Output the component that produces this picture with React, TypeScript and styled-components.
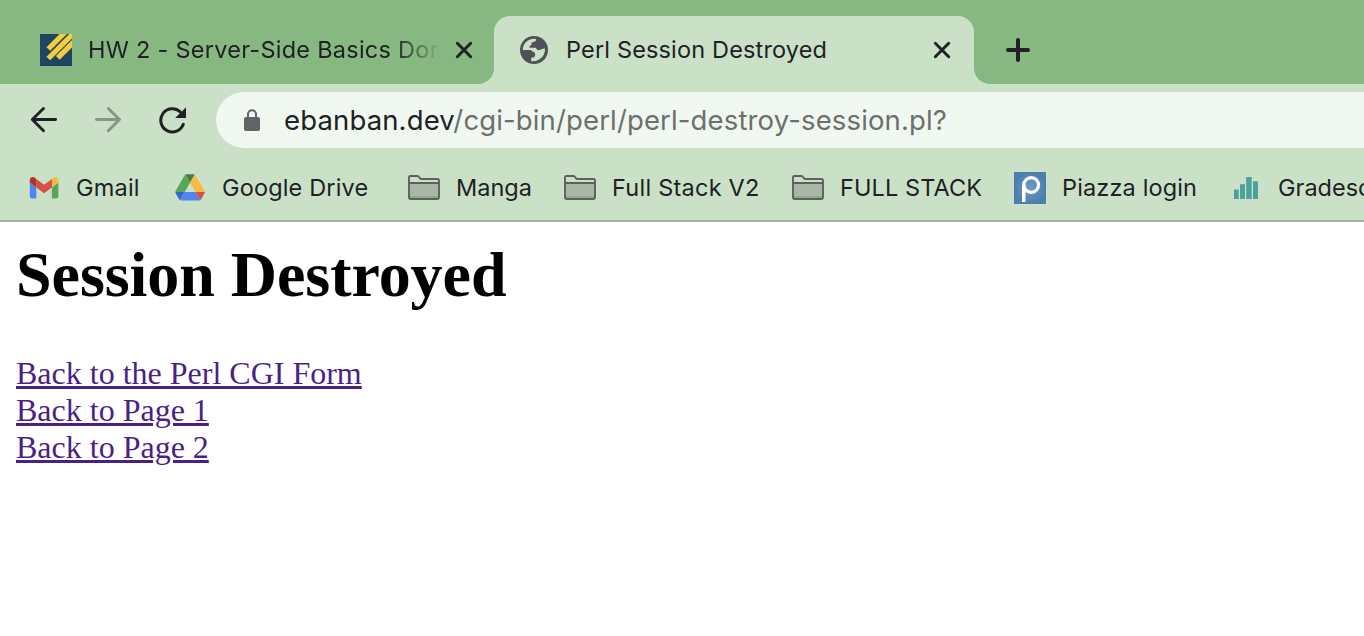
import React from "react";
import styled, { createGlobalStyle } from "styled-components";

const ink = "#202124";
const strip = "#87b882";
const surface = "#cbe1c7";

const GlobalStyle = createGlobalStyle`
  * { box-sizing: border-box; }
  html, body { margin: 0; background: #fff; }
  body { overflow: hidden; }
`;

const Browser = styled.div`
  width: 1364px;
  height: 636px;
  overflow: hidden;
  display: flex;
  flex-direction: column;
  font-family: "Inter", sans-serif;
  color: ${ink};
  svg { display: block; flex: none; }
`;

const TabStrip = styled.div`
  height: 84px;
  display: flex;
  background: ${surface};
`;

const InactiveTab = styled.div`
  width: 494px;
  padding: 16px 21px 0 40px;
  display: flex;
  align-items: center;
  background: ${strip};
  border-bottom-right-radius: 16px;
`;

const ActiveSlot = styled.div`
  width: 480px;
  padding-top: 16px;
  background: ${strip};
`;

const ActiveTab = styled.div`
  height: 68px;
  padding: 0 23px 0 26px;
  display: flex;
  align-items: center;
  background: ${surface};
  border-radius: 16px 16px 0 0;
`;

const StripEnd = styled.div`
  flex: 1;
  padding: 16px 0 0 32px;
  display: flex;
  align-items: center;
  background: ${strip};
  border-bottom-left-radius: 16px;
`;

const Label = styled.span<{ $track: number; $size?: number }>`
  font-size: ${(p) => p.$size ?? 23.5}px;
  line-height: 32px;
  letter-spacing: ${(p) => p.$track}px;
  white-space: pre;
`;

const TabTitle = styled(Label)<{ $fade?: boolean }>`
  flex: 1;
  min-width: 0;
  overflow: hidden;
  margin-left: ${(p) => (p.$fade ? 16 : 18)}px;
  margin-right: ${(p) => (p.$fade ? 16 : 10)}px;
  ${(p) => p.$fade && "mask-image: linear-gradient(to right, #000 calc(100% - 46px), transparent calc(100% + 2px));"}
`;

const Toolbar = styled.div`
  height: 72px;
  padding: 8px 0 8px 30px;
  display: flex;
  align-items: center;
  background: ${surface};
`;

const NavIcons = styled.div`
  width: 186px;
  display: flex;
  gap: 36px;
`;

const AddressBar = styled.div`
  flex: 1;
  height: 56px;
  padding-left: 27px;
  display: flex;
  align-items: center;
  gap: 23px;
  background: #f1f8f1;
  border-radius: 28px 0 0 28px;
`;

const Path = styled.span`
  color: #6b706d;
`;

const BookmarksBar = styled.div`
  height: 66px;
  padding-left: 28px;
  display: flex;
  align-items: center;
  background: ${surface};
  border-bottom: 2px solid #a5b1a2;
`;

const Bookmark = styled.div<{ $width: number }>`
  flex: none;
  width: ${(p) => p.$width}px;
  display: flex;
  align-items: center;
  gap: 16px;
`;

const Page = styled.main`
  padding: 0 16px;
  font-family: "Liberation Serif", serif;
  color: #000;
`;

const Heading = styled.h1`
  margin: 15px 0 43px;
  font-size: 64px;
  line-height: 75px;
  font-weight: 700;
  letter-spacing: -0.05px;
`;

const Links = styled.nav`
  display: flex;
  flex-direction: column;
  align-items: flex-start;
`;

const PageLink = styled.a`
  font-size: 32px;
  line-height: 37px;
  color: #4b1f86;
  text-decoration: underline;
  text-decoration-thickness: 3px;
`;

const CampusIcon = () => (
  <svg width="32" height="32" viewBox="0 0 32 32">
    <path fill="#1d4660" d="M0 0h32v32H0z" />
    <path d="M8.3 15L26 -2.7M8.3 24.5L34 -1.2M17.800 23.900L34 7.700" stroke="#f5cc3f" strokeWidth="5.2" />
  </svg>
);

const GlobeIcon = () => (
  <svg width="28" height="28" viewBox="0 0 28 28">
    <circle cx="14" cy="14" r="14" fill="#505157" />
    <path
      fill={surface}
      d="M2.8 14C2.8 8 7.4 3 14 2.8l2 .2c.2 1.8-.4 2.6-1.8 2.8-1.8.2-2.6.6-2.7 2 0 1.3-.6 2.2-2 2.200v1.800h5c1.600 0 2.300.6 2.400 2.200h2.200c2 0 2.700-1.400 5.900-1.400.4 6.400-4.200 12.100-11 12.600h-2.800v-3.400c2.400 0 4-.6 4-3 0-2-1-3-3-3.200-.6-1.200-1.200-1.600-2.400-1.600z"
    />
  </svg>
);

const CloseIcon = () => (
  <svg width="18" height="18" viewBox="0 0 18 18">
    <path d="M2.3 2.3L15.7 15.7M15.7 2.3L2.3 15.7" stroke={ink} strokeWidth="3" strokeLinecap="round" />
  </svg>
);

const PlusIcon = () => (
  <svg width="24" height="24" viewBox="0 0 24 24">
    <path d="M12 2V22M2 12H22" stroke={ink} strokeWidth="4" strokeLinecap="round" />
  </svg>
);

const BackIcon = () => (
  <svg width="28" height="28" viewBox="0 0 28 28">
    <path d="M13.5 2.500L2.300 13.500L13.500 24.800M3 13.500H25.600" fill="none" stroke={ink} strokeWidth="2.9" strokeLinecap="round" strokeLinejoin="round" />
  </svg>
);

const ForwardIcon = () => (
  <svg width="28" height="28" viewBox="0 0 28 28">
    <path d="M14.300 2.500L25.500 13.500L14.300 24.800M25 13.500H2.500" fill="none" stroke="#859683" strokeWidth="2.9" strokeLinecap="round" strokeLinejoin="round" />
  </svg>
);

const ReloadIcon = () => (
  <svg width="30" height="28" viewBox="0 0 30 28">
    <path d="M25.3 18.3A11.6 11.6 0 1 1 22.2 5.8" fill="none" stroke={ink} strokeWidth="3" strokeLinecap="round" />
    <path d="M28 1.2V12H17.2z" fill={ink} />
  </svg>
);

const LockIcon = () => (
  <svg width="18" height="24" viewBox="0 0 18 24">
    <path d="M5 10V6.3a4 4 0 0 1 8 0V10" fill="none" stroke="#606368" strokeWidth="2" />
    <rect x="1" y="9" width="16" height="14" rx="2" fill="#606368" />
  </svg>
);

const GmailIcon = () => (
  <svg width="32" height="32" viewBox="0 0 32 32">
    <g transform="translate(1.8 5) scale(.325) translate(-52 -42)">
      <path fill="#5086ec" d="M58 108h14V74L52 59v43c0 3.32 2.69 6 6 6" />
      <path fill="#5aa55c" d="M120 108h14c3.32 0 6-2.69 6-6V59l-20 15" />
      <path fill="#f2bd42" d="M120 48v26l20-15v-8c0-7.42-8.47-11.65-14.4-7.2" />
      <path fill="#d85140" d="M72 74V48l24 18 24-18v26L96 92" />
      <path fill="#b03428" d="M52 51v8l20 15V48l-5.6-4.2c-5.94-4.45-14.4-.22-14.4 7.2" />
    </g>
  </svg>
);

const DriveIcon = () => (
  <svg width="32" height="32" viewBox="0 0 32 32">
    <g transform="translate(1.4 2.2) scale(.337)">
      <path fill="#3067d3" d="m6.6 66.85 3.85 6.65c.8 1.4 1.95 2.5 3.3 3.3l13.75-23.8h-27.5c0 1.55.4 3.1 1.2 4.5z" />
      <path fill="#5aa55c" d="m43.65 25-13.75-23.8c-1.35.8-2.5 1.9-3.3 3.3l-25.4 44a9.06 9.06 0 0 0 -1.2 4.5h27.5z" />
      <path fill="#d85140" d="m73.55 76.8c1.35-.8 2.5-1.9 3.3-3.3l1.6-2.75 7.65-13.25c.8-1.4 1.2-2.95 1.2-4.5h-27.502l5.852 11.5z" />
      <path fill="#3f8040" d="m43.65 25 13.75-23.8c-1.35-.8-2.9-1.2-4.5-1.2h-18.5c-1.6 0-3.15.45-4.5 1.2z" />
      <path fill="#5086ec" d="m59.8 53h-32.3l-13.75 23.8c1.35.8 2.9 1.2 4.5 1.2h50.8c1.6 0 3.15-.45 4.5-1.2z" />
      <path fill="#f2bd42" d="m73.4 26.5-12.7-22c-.8-1.4-1.95-2.5-3.3-3.3l-13.75 23.8 16.15 28h27.45c0-1.55-.4-3.1-1.2-4.5z" />
    </g>
  </svg>
);

const FolderIcon = () => (
  <svg width="32" height="32" viewBox="0 0 32 32">
    <path d="M1.5 11H30.5V27H1.5z" fill="#a8b8a5" />
    <path d="M1.5 24H30.5V27H1.5z" fill="#94a592" />
    <path
      d="M1 25.5V5.5Q1 4 2.5 4H9.5Q10.5 4 11 5L12 6.3Q12.4 7 13.5 7H29.5Q31 7 31 8.5V25.5Q31 27 29.5 27H2.5Q1 27 1 25.5zM1 11H31"
      fill="none"
      stroke="#5d5f60"
      strokeWidth="1.9"
    />
  </svg>
);

const PiazzaIcon = () => (
  <svg width="32" height="32" viewBox="0 0 32 32">
    <defs>
      <radialGradient id="piazza">
        <stop offset="0" stopColor="#6b9bc8" />
        <stop offset="1" stopColor="#4f7dab" />
      </radialGradient>
    </defs>
    <path d="M0 0h32v32H0z" fill="url(#piazza)" />
    <circle cx="17.2" cy="13" r="7.4" fill="none" stroke="#fff" strokeWidth="3.2" />
    <path d="M9.8 13V30" stroke="#fff" strokeWidth="3.6" />
  </svg>
);

const BarsIcon = () => (
  <svg width="32" height="32" viewBox="0 0 32 32">
    <path d="M4 17.500h4.700V27H4zM10 12.300h5V27h-5zM16.200 5h5.500v22h-5.500zM23 9.200h5V27h-5z" fill="#4ca0a0" />
  </svg>
);

const bookmarks = [
  { label: "Gmail", width: 146, track: 0.2, icon: <GmailIcon /> },
  { label: "Google Drive", width: 234, track: 0.15, icon: <DriveIcon /> },
  { label: "Manga", width: 156, track: 0, icon: <FolderIcon /> },
  { label: "Full Stack V2", width: 228, track: 0.24, icon: <FolderIcon /> },
  { label: "FULL STACK", width: 222, track: 0.1, icon: <FolderIcon /> },
  { label: "Piazza login", width: 216, track: 0.14, icon: <PiazzaIcon /> },
  { label: "Gradescope", width: 200, track: 0, icon: <BarsIcon /> },
];

const links = ["Back to the Perl CGI Form", "Back to Page 1", "Back to Page 2"];

export default function App() {
  return (
    <Browser>
      <GlobalStyle />
      <TabStrip>
        <InactiveTab>
          <CampusIcon />
          <TabTitle $fade $track={0.26}>HW 2 - Server-Side Basics Done</TabTitle>
          <CloseIcon />
        </InactiveTab>
        <ActiveSlot>
          <ActiveTab>
            <GlobeIcon />
            <TabTitle $track={0.16}>Perl Session Destroyed</TabTitle>
            <CloseIcon />
          </ActiveTab>
        </ActiveSlot>
        <StripEnd>
          <PlusIcon />
        </StripEnd>
      </TabStrip>
      <Toolbar>
        <NavIcons>
          <BackIcon />
          <ForwardIcon />
          <ReloadIcon />
        </NavIcons>
        <AddressBar>
          <LockIcon />
          <Label $track={0.14} $size={27.5}>
            ebanban.dev<Path>/cgi-bin/perl/perl-destroy-session.pl?</Path>
          </Label>
        </AddressBar>
      </Toolbar>
      <BookmarksBar>
        {bookmarks.map((b) => (
          <Bookmark key={b.label} $width={b.width}>
            {b.icon}
            <Label $track={b.track}>{b.label}</Label>
          </Bookmark>
        ))}
      </BookmarksBar>
      <Page>
        <Heading>Session Destroyed</Heading>
        <Links>
          {links.map((text) => (
            <PageLink key={text} href="#">{text}</PageLink>
          ))}
        </Links>
      </Page>
    </Browser>
  );
}
